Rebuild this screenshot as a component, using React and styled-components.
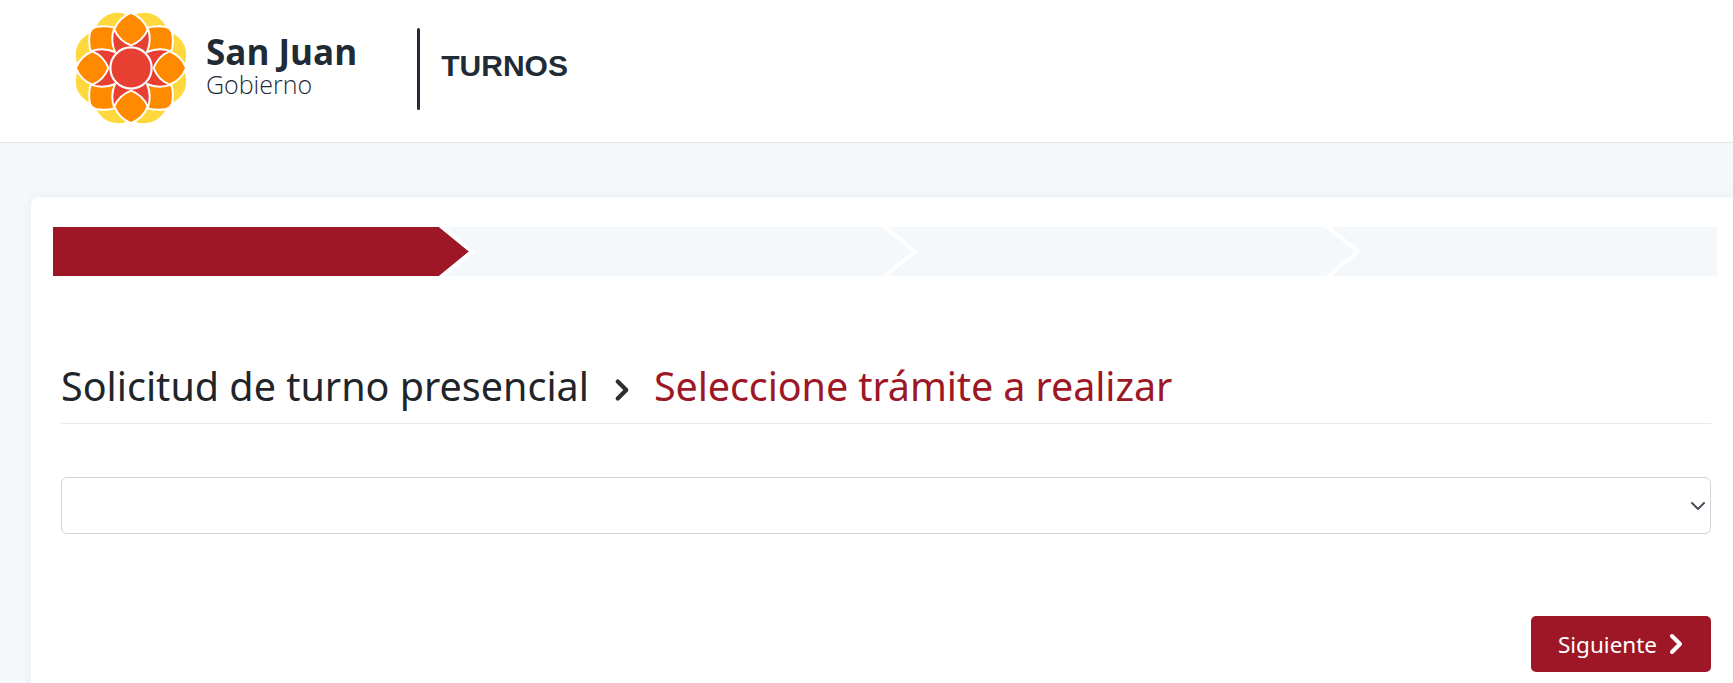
import React from 'react'
import styled, { createGlobalStyle } from 'styled-components'
import { ChevronRight } from 'lucide-react'

const RED = '#9d1726'

const GlobalStyle = createGlobalStyle`
  html, body {
    margin: 0;
    height: 100%;
    overflow: hidden;
    background: #f5f8fb;
    font-family: "Noto Sans", "Open Sans", sans-serif;
    color: #212529;
  }
`

const Header = styled.header`
  display: flex;
  align-items: center;
  box-sizing: border-box;
  height: 143px;
  padding: 0 0 7px 72px;
  background: #fff;
  border-bottom: 1px solid #dfe5ea;
`

const Logo = styled.svg`
  width: 118px;
  height: 118px;
  flex: none;
`

const Brand = styled.div`
  display: flex;
  flex-direction: column;
  margin: -4px 0 0 16px;
  color: #212b36;
`

const BrandName = styled.span`
  font-family: "Open Sans", sans-serif;
  font-size: 35px;
  line-height: 37px;
  font-weight: 700;
`

const BrandSub = styled.span`
  font-family: "Open Sans", sans-serif;
  font-size: 25px;
  line-height: 29px;
  font-weight: 300;
`

const Divider = styled.div`
  width: 3px;
  height: 82px;
  margin: 3px 0 0 60px;
  border-radius: 2px;
  background: #212b36;
`

const AppName = styled.div`
  margin: -3px 0 0 21px;
  font-family: "Liberation Sans", Arial, sans-serif;
  font-size: 30px;
  font-weight: 700;
  color: #212b36;
`

const Main = styled.main`
  padding: 54px 0 0 31px;
`

const Card = styled.section`
  padding: 30px 16px 11px 22px;
  background: #fff;
  border-radius: 8px 0 0 0;
  box-shadow: 0 0 10px rgba(140, 152, 164, 0.14);
`

const Steps = styled.div`
  display: flex;
  height: 49px;
  overflow: hidden;
  background: #f5f8fb;
`

const Step = styled.div`
  position: relative;
  flex: 0 0 ${props => props.$width}px;
  background: ${props => props.$active ? RED : 'transparent'};

  &::before {
    content: '';
    display: ${props => props.$active ? 'block' : 'none'};
    position: absolute;
    top: 0;
    left: 100%;
    width: 30px;
    height: 100%;
    background: ${RED};
    clip-path: polygon(0 0, 100% 50%, 0 100%);
  }

  &::after {
    content: '';
    position: absolute;
    top: 0;
    left: 100%;
    width: 36px;
    height: 100%;
    background: #fff;
    clip-path: polygon(0 0, 6px 0, 100% 50%, 6px 100%, 0 100%, 30px 50%);
  }
`

const Body = styled.div`
  padding: 0 6px 0 8px;
`

const Title = styled.h1`
  display: flex;
  align-items: center;
  margin: 84px 0 0;
  padding-bottom: 11px;
  font-size: 39.5px;
  line-height: 52px;
  font-weight: 400;
  border-bottom: 1px solid #e9ecef;
`

const TitleArrow = styled(ChevronRight)`
  margin: 8px 15px 0 16px;
  color: #2b2f33;
`

const TitleCurrent = styled.span`
  color: ${RED};
  letter-spacing: -0.1px;
`

const SelectWrap = styled.div`
  position: relative;
  margin-top: 53px;
`

const Select = styled.select`
  display: block;
  width: 100%;
  height: 57px;
  padding: 0 40px 0 16px;
  appearance: none;
  background: #fff;
  border: 1px solid #ced4da;
  border-radius: 6px;
  font-family: inherit;
  font-size: 20px;
  color: #212529;
`

const SelectArrow = styled.svg`
  position: absolute;
  top: 21px;
  right: 5px;
  width: 16px;
  height: 16px;
  pointer-events: none;
`

const Actions = styled.div`
  display: flex;
  justify-content: flex-end;
  margin-top: 82px;
`

const NextButton = styled.button`
  display: flex;
  align-items: center;
  justify-content: center;
  gap: 3px;
  box-sizing: border-box;
  width: 180px;
  height: 56px;
  padding: 0 0 0 8px;
  background: ${RED};
  border: none;
  border-radius: 5px;
  color: #fff;
  font-family: inherit;
  font-size: 22.5px;
`

function FlowerLogo() {
  const step = [0, 45, 90, 135, 180, 225, 270, 315]
  return (
    <Logo viewBox="-60 -60 120 120" aria-hidden="true">
      <g stroke="#fff" strokeWidth="2" strokeLinejoin="round">
        {step.map(a => (
          <path key={a} transform={`rotate(${a + 22.5})`} fill="#ffd83d" d="M-21,-50 Q0,-70 21,-50 L0,-30 Z" />
        ))}
        <circle r="41" fill="#e83f33" stroke="none" />
        {step.map(a => a % 90 === 0 ? (
          <path key={a} transform={`rotate(${a})`} fill="#ff8a00" d="M0,-56 A30,30 0 0 1 17,-39 A30,30 0 0 1 0,-23 A30,30 0 0 1 -17,-39 A30,30 0 0 1 0,-56 Z" />
        ) : (
          <path key={a} transform={`rotate(${a})`} fill="#ff8a00" d="M0,-23 A34,34 0 0 0 -17,-41 A40,40 0 0 1 -4,-55 Q0,-57 4,-55 A40,40 0 0 1 17,-41 A34,34 0 0 0 0,-23 Z" />
        ))}
        <circle r="21" fill="#e83f33" strokeWidth="2.2" />
      </g>
    </Logo>
  )
}

export default function App() {
  return (
    <>
      <GlobalStyle />
      <Header>
        <FlowerLogo />
        <Brand>
          <BrandName>San Juan</BrandName>
          <BrandSub>Gobierno</BrandSub>
        </Brand>
        <Divider />
        <AppName>TURNOS</AppName>
      </Header>
      <Main>
        <Card>
          <Steps>
            <Step $active $width={386} />
            <Step $width={443} />
            <Step $width={443} />
            <Step $width={443} />
          </Steps>
          <Body>
            <Title>
              Solicitud de turno presencial
              <TitleArrow size={34} strokeWidth={3} />
              <TitleCurrent>Seleccione trámite a realizar</TitleCurrent>
            </Title>
            <SelectWrap>
              <Select aria-label="Trámite" defaultValue="">
                <option value=""></option>
              </Select>
              <SelectArrow viewBox="0 0 16 16" aria-hidden="true">
                <path d="m2 5 6 6 6-6" fill="none" stroke="#4b5058" strokeWidth="2" strokeLinecap="round" strokeLinejoin="round" />
              </SelectArrow>
            </SelectWrap>
            <Actions>
              <NextButton>
                Siguiente
                <ChevronRight size={32} strokeWidth={3} />
              </NextButton>
            </Actions>
          </Body>
        </Card>
      </Main>
    </>
  )
}
